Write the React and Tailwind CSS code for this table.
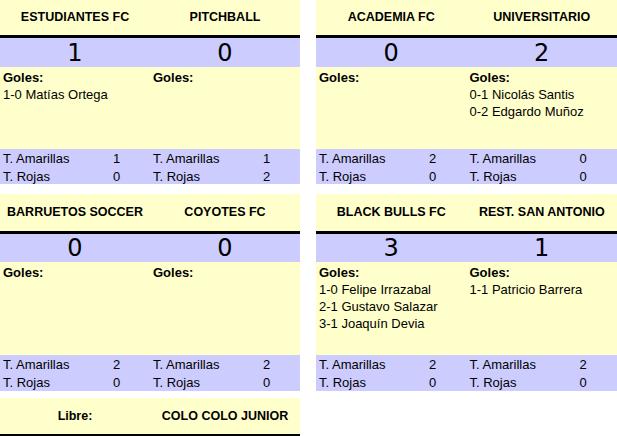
import React from "react";

const matches = [
  {
    home: "ESTUDIANTES FC",
    away: "PITCHBALL",
    score: [1, 0],
    goals: [["1-0 Matías Ortega"], []],
    cards: [
      [1, 0],
      [1, 2],
    ],
  },
  {
    home: "ACADEMIA FC",
    away: "UNIVERSITARIO",
    score: [0, 2],
    goals: [[], ["0-1 Nicolás Santis", "0-2 Edgardo Muñoz"]],
    cards: [
      [2, 0],
      [0, 0],
    ],
  },
  {
    home: "BARRUETOS SOCCER",
    away: "COYOTES FC",
    score: [0, 0],
    goals: [[], []],
    cards: [
      [2, 0],
      [2, 0],
    ],
  },
  {
    home: "BLACK BULLS FC",
    away: "REST. SAN ANTONIO",
    score: [3, 1],
    goals: [
      ["1-0 Felipe Irrazabal", "2-1 Gustavo Salazar", "3-1 Joaquín Devia"],
      ["1-1 Patricio Barrera"],
    ],
    cards: [
      [2, 0],
      [2, 0],
    ],
  },
];

// header heights include the 3px black rule underneath
const rowSizes = [
  { header: "h-[38px]", score: "h-[29px]", goals: "h-[82px]", stats: "h-[35px]" },
  { header: "h-[40px]", score: "h-[28px]", goals: "h-[93px]", stats: "h-[36px]" },
];

const MatchCard = ({ match, size }) => {
  return (
    <div className="flex flex-col">
      <div
        className={`${size.header} grid grid-cols-2 items-center bg-[#ffffcc] border-b-[3px] border-black`}>
        <div className="text-center text-[12.5px] font-bold">{match.home}</div>
        <div className="text-center text-[12.5px] font-bold">{match.away}</div>
      </div>
      <div
        className={`${size.score} grid grid-cols-2 items-center bg-[#ccccff] font-['DejaVu_Sans',sans-serif] text-[24px] leading-none`}>
        <div className="text-center">{match.score[0]}</div>
        <div className="text-center">{match.score[1]}</div>
      </div>
      <div
        className={`${size.goals} grid grid-cols-2 bg-[#ffffcc] pt-[2px] text-[13px] leading-[17px]`}>
        {match.goals.map((list, i) => (
          <div key={i} className="pl-[3px]">
            <div className="font-bold">Goles:</div>
            {list.map((g) => (
              <div key={g}>{g}</div>
            ))}
          </div>
        ))}
      </div>
      <div
        className={`${size.stats} grid grid-cols-2 bg-[#ccccff] pt-[1px] text-[13px] leading-[18px]`}>
        {match.cards.map((c, i) => (
          <div key={i} className="grid grid-cols-[100px_27px] pl-[3px]">
            <div>T. Amarillas</div>
            <div className="text-center">{c[0]}</div>
            <div>T. Rojas</div>
            <div className="text-center">{c[1]}</div>
          </div>
        ))}
      </div>
    </div>
  );
};

export default function App() {
  return (
    <div className="w-[617px] h-[436px] bg-white text-black font-['Liberation_Sans',Arial,sans-serif] overflow-hidden">
      <div className="grid grid-cols-[300px_301px] gap-x-[16px] gap-y-[10px]">
        <MatchCard match={matches[0]} size={rowSizes[0]} />
        <MatchCard match={matches[1]} size={rowSizes[0]} />
        <MatchCard match={matches[2]} size={rowSizes[1]} />
        <MatchCard match={matches[3]} size={rowSizes[1]} />
      </div>
      <div className="mt-[7px] w-[300px] h-[36px] grid grid-cols-2 items-center bg-[#ffffcc] border-b-[3px] border-black box-content">
        <div className="text-center text-[12.5px] font-bold">Libre:</div>
        <div className="text-center text-[12.5px] font-bold">COLO COLO JUNIOR</div>
      </div>
    </div>
  );
}
